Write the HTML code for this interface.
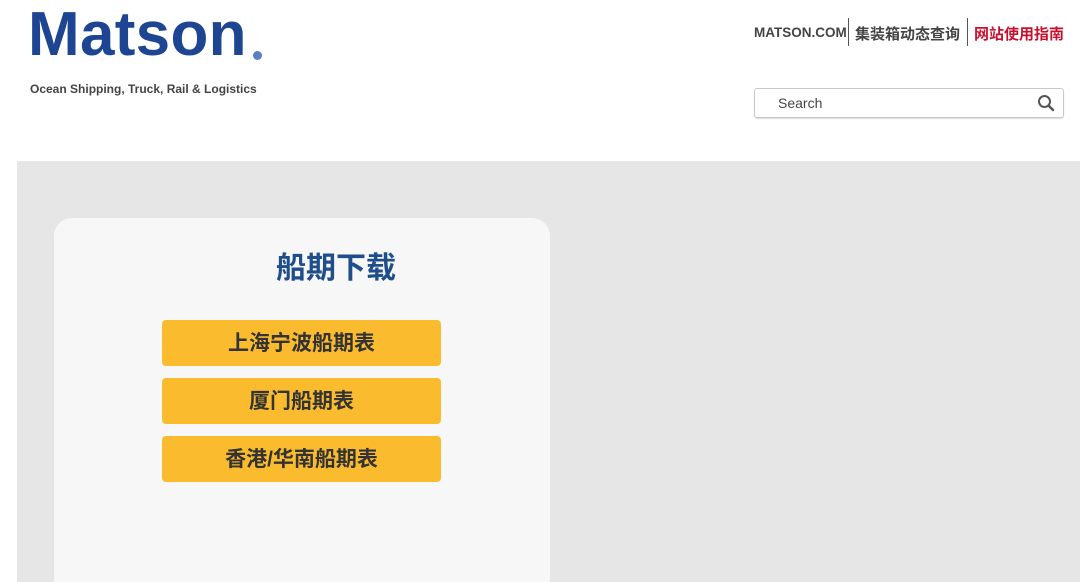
<!DOCTYPE html>
<html style="overflow:hidden"><head><meta charset="utf-8"><style>
html,body{margin:0;width:1080px;height:582px;overflow:hidden}
body{background:#fff;position:relative;font-family:"Liberation Sans","Noto Sans CJK SC",sans-serif}
.logo{position:absolute;left:28px;top:-1px;font-size:62px;font-weight:bold;color:#1d4592;letter-spacing:0.3px}
.reg{position:absolute;left:253px;top:51px;width:9px;height:9px;border-radius:50%;background:#5b7fc0}
.tag{position:absolute;left:30px;top:82px;font-size:12px;font-weight:bold;color:#444}
.nav{position:absolute;top:23px;font-size:15px;font-weight:bold;color:#444;white-space:nowrap}
.sep{position:absolute;top:18px;width:1px;height:28px;background:#555}
.search{position:absolute;left:754px;top:88px;width:308px;height:28px;border:1px solid #c8c8c8;border-radius:3px;box-shadow:0 1px 1px #ddd}
.search span{position:absolute;left:23px;top:6px;font-size:14px;color:#444}
.gray{position:absolute;left:17px;top:161px;right:0;bottom:0;background:#e6e6e6}
.card{position:absolute;left:54px;top:218px;width:496px;height:380px;background:#f7f7f7;border-radius:18px}
.title{position:absolute;left:54px;width:564px;top:243px;text-align:center;font-size:30px;font-weight:bold;color:#1f4e8c}
.btn{position:absolute;left:162px;width:279px;height:46px;background:#fbbb2f;border-radius:4px;text-align:center;line-height:48px;font-size:21px;font-weight:bold;color:#333}
</style></head><body>
<div class="logo">Matson</div><div class="reg"></div>
<div class="tag">Ocean Shipping, Truck, Rail &amp; Logistics</div>
<div class="nav" style="left:754px;font-size:13.5px;top:25px">MATSON.COM</div>
<div class="sep" style="left:848px"></div>
<div class="nav" style="left:855px">集装箱动态查询</div>
<div class="sep" style="left:967px"></div>
<div class="nav" style="left:974px;color:#c8102e">网站使用指南</div>
<div class="search"><span>Search</span>
<svg style="position:absolute;right:8px;top:5px" width="18" height="18" viewBox="0 0 18 18"><circle cx="7.5" cy="7.5" r="5.5" fill="none" stroke="#555" stroke-width="2"/><line x1="11.5" y1="11.5" x2="16" y2="16" stroke="#555" stroke-width="2.4" stroke-linecap="round"/></svg></div>
<div class="gray"></div>
<div class="card"></div>
<div class="title">船期下载</div>
<div class="btn" style="top:320px">上海宁波船期表</div>
<div class="btn" style="top:378px">厦门船期表</div>
<div class="btn" style="top:436px">香港/华南船期表</div>
</body></html>
